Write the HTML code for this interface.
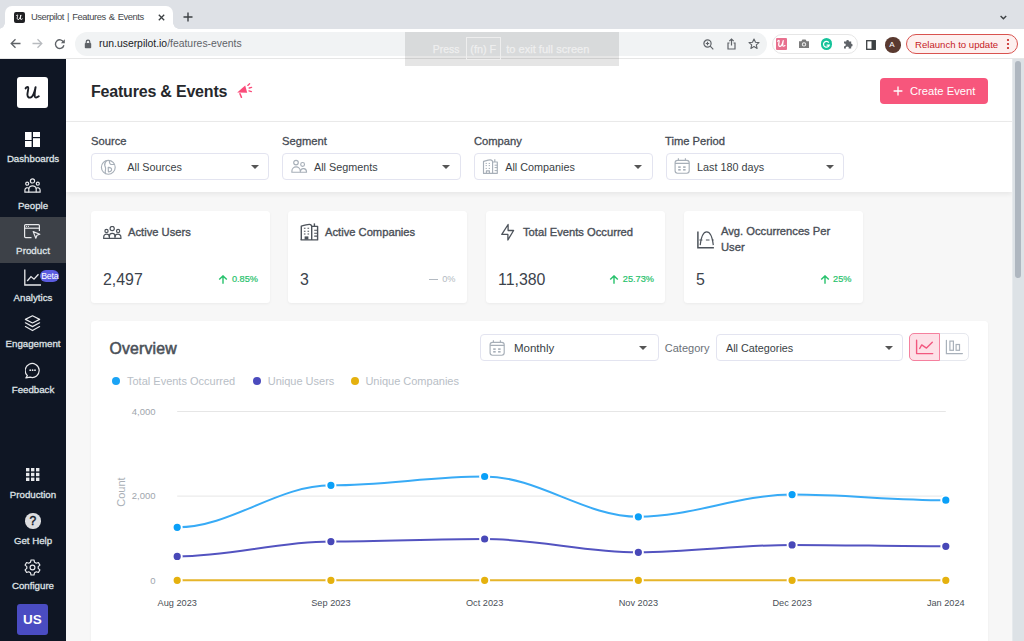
<!DOCTYPE html>
<html><head><meta charset="utf-8">
<style>
*{box-sizing:border-box;margin:0;padding:0}
html,body{width:1024px;height:641px;overflow:hidden;background:#fff;font-family:"Liberation Sans",sans-serif;}
.abs{position:absolute}
.t{position:absolute;white-space:nowrap;line-height:1}
/* chrome */
#tabstrip{left:0;top:0;width:1024px;height:29px;background:#dee1e6}
#tab{left:5px;top:6px;width:168px;height:23px;background:#fff;border-radius:7px 7px 0 0}
#toolbar{left:0;top:29px;width:1024px;height:30px;background:#fff}
#urlpill{left:75px;top:32px;width:692px;height:24px;background:#f1f3f4;border-radius:12px}
#sep{left:0;top:58px;width:1024px;height:1px;background:#e6e6e6}
#extpill{left:772px;top:34px;width:86px;height:20px;border:1px solid #e6e6e6;border-radius:10px;background:#fff}
#relaunch{left:906px;top:34px;width:112px;height:20px;border:1px solid #d9534f;border-radius:10px;background:#fdf0ef}
/* sidebar */
#side{left:0;top:59px;width:66px;height:582px;background:#0f1624}
.sl{position:absolute;left:0;width:66px;text-align:center;color:#dfe1e5;font-size:9.6px;font-weight:400;-webkit-text-stroke:0.3px #dfe1e5;line-height:1;white-space:nowrap}
/* main */
#main{left:66px;top:59px;width:946px;height:582px;background:#f7f7f7}
#hdr{left:66px;top:59px;width:946px;height:63px;background:#fff;border-bottom:1px solid #ececec}
#filters{left:66px;top:122px;width:946px;height:70px;background:#fff;box-shadow:0 2px 5px rgba(0,0,0,0.07)}
.lbl{position:absolute;font-size:11.2px;color:#3f444b;white-space:nowrap;line-height:1}
.sel{position:absolute;height:27px;border:1px solid #e3e4f0;border-radius:4px;background:#fff}
.caret{position:absolute;width:0;height:0;border-left:4px solid transparent;border-right:4px solid transparent;border-top:4px solid #555}
.card{position:absolute;background:#fff;border-radius:3.5px;box-shadow:0 1px 3px rgba(0,0,0,0.05)}
.ct{position:absolute;font-size:11.2px;font-weight:400;-webkit-text-stroke:0.35px #4a4f57;color:#4a4f57;white-space:nowrap;line-height:1}
.cv{position:absolute;font-size:15.9px;color:#3c434c;white-space:nowrap;line-height:1}
.cp{position:absolute;font-size:9px;color:#2bbf6a;white-space:nowrap;line-height:1}
#scroll{left:1012px;top:59px;width:12px;height:582px;background:#dde2e6;border-left:1px solid #e6eaed}
#thumb{left:1015px;top:61px;width:6.2px;height:216.5px;background:#afb7c0;border-radius:3.1px}
</style></head>
<body>
<div id="tabstrip" class="abs"></div>
<div id="tab" class="abs"></div>
<div id="toolbar" class="abs"></div>
<div class="abs" style="left:-1px;top:23px;width:6px;height:6px;background:radial-gradient(circle at 0 0,#dee1e6 5.5px,#fff 6px)"></div>
<div class="abs" style="left:173px;top:23px;width:6px;height:6px;background:radial-gradient(circle at 6px 0,#dee1e6 5.5px,#fff 6px)"></div>

<div id="urlpill" class="abs"></div>
<div id="sep" class="abs"></div>
<div id="extpill" class="abs"></div>
<div id="relaunch" class="abs"></div>
<!-- tab content -->
<div class="abs" style="left:14px;top:12px;width:11px;height:11px;background:#202124;border-radius:2px"></div>
<svg class="abs" style="left:14px;top:12px" width="11" height="11" viewBox="3 3.5 25 25"><path d="M8.6 11.4C9.4 10.2 10.6 9.6 11.2 10.4C11.8 11.2 10.4 15.4 10.4 17.6C10.4 19.8 11.6 20.8 13.2 20.6C15.6 20.2 17.4 15.8 18.6 10.2C18 13.6 17.4 17.4 17.8 19.4C18.2 21 19.6 20.8 21.8 19.2" stroke="#fff" stroke-width="2.2" fill="none" stroke-linecap="round" stroke-linejoin="round"/></svg>
<div class="t" style="left:31px;top:11.9px;font-size:9.4px;letter-spacing:-0.45px;word-spacing:1px;color:#45484c">Userpilot | Features &amp; Events</div>
<svg class="abs" style="left:158px;top:14px" width="7" height="7" viewBox="0 0 7 7"><path d="M0.8 0.8L6.2 6.2M6.2 0.8L0.8 6.2" stroke="#3c4043" stroke-width="1.3"/></svg>
<svg class="abs" style="left:183px;top:12px" width="10" height="10" viewBox="0 0 10 10"><path d="M5 0.5V9.5M0.5 5H9.5" stroke="#3c4043" stroke-width="1.4"/></svg>
<svg class="abs" style="left:998.5px;top:14px" width="9" height="7" viewBox="0 0 9 7"><path d="M1.6 2L4.4 4.8L7.2 2" stroke="#3c4043" stroke-width="1.4" fill="none"/></svg>
<!-- nav -->
<svg class="abs" style="left:10px;top:38px" width="11" height="11" viewBox="0 0 11 11"><path d="M10.5 5.5H1.2M5.5 1.2L1.2 5.5L5.5 9.8" stroke="#5f6368" stroke-width="1.3" fill="none"/></svg>
<svg class="abs" style="left:32px;top:38px" width="11" height="11" viewBox="0 0 11 11"><path d="M0.5 5.5H9.8M5.5 1.2L9.8 5.5L5.5 9.8" stroke="#b8bbbf" stroke-width="1.3" fill="none"/></svg>
<svg class="abs" style="left:54px;top:38px" width="12" height="12" viewBox="0 0 12 12"><path d="M9.6 4.2A4.3 4.3 0 1 0 9.9 7.2" stroke="#5f6368" stroke-width="1.4" fill="none"/><path d="M10.8 1.2V5.2H6.8Z" fill="#5f6368"/></svg>
<!-- lock -->
<svg class="abs" style="left:84px;top:39px" width="8" height="10" viewBox="0 0 8 10"><rect x="0.8" y="4" width="6.4" height="5.2" rx="0.8" fill="#5f6368"/><path d="M2.2 4.2V3A1.8 1.8 0 0 1 5.8 3V4.2" stroke="#5f6368" stroke-width="1.2" fill="none"/></svg>
<div class="t" style="left:99px;top:38.8px;font-size:10.4px;color:#202124">run.userpilot.io<span style="color:#5f6368">/features-events</span></div>
<!-- url right icons -->
<svg class="abs" style="left:703px;top:39px" width="11" height="11" viewBox="0 0 11 11"><circle cx="4.5" cy="4.5" r="3.6" stroke="#5f6368" stroke-width="1.2" fill="none"/><path d="M7.2 7.2L10.3 10.3M4.5 2.8V6.2M2.8 4.5H6.2" stroke="#5f6368" stroke-width="1.2"/></svg>
<svg class="abs" style="left:726px;top:38px" width="11" height="12" viewBox="0 0 11 12"><path d="M3.5 5H2V11H9V5H7.5" stroke="#5f6368" stroke-width="1.2" fill="none"/><path d="M5.5 7.5V1M3.3 3.2L5.5 1L7.7 3.2" stroke="#5f6368" stroke-width="1.2" fill="none"/></svg>
<svg class="abs" style="left:748px;top:38px" width="12" height="12" viewBox="0 0 12 12"><path d="M6 1L7.5 4.3L11 4.6L8.3 6.9L9.1 10.4L6 8.6L2.9 10.4L3.7 6.9L1 4.6L4.5 4.3Z" stroke="#5f6368" stroke-width="1.1" fill="none" stroke-linejoin="round"/></svg>
<!-- extensions -->
<div class="abs" style="left:776px;top:38px;width:11px;height:11.5px;background:#e8718f;border-radius:1px"></div>
<svg class="abs" style="left:776px;top:38.2px" width="11" height="11" viewBox="5.5 5.5 20 20"><path d="M8.6 11.4C9.4 10.2 10.6 9.6 11.2 10.4C11.8 11.2 10.4 15.4 10.4 17.6C10.4 19.8 11.6 20.8 13.2 20.6C15.6 20.2 17.4 15.8 18.6 10.2C18 13.6 17.4 17.4 17.8 19.4C18.2 21 19.6 20.8 21.8 19.2" stroke="#fff" stroke-width="2.2" fill="none" stroke-linecap="round" stroke-linejoin="round"/></svg>
<svg class="abs" style="left:798px;top:38px" width="12" height="11" viewBox="0 0 12 11"><path d="M1 3.2H3.4L4.4 1.6H7.6L8.6 3.2H11V10H1Z" fill="#7c7c7c"/><circle cx="6" cy="6.4" r="2.1" fill="#fff"/><circle cx="6" cy="6.4" r="1.2" fill="#7c7c7c"/></svg>
<div class="abs" style="left:820.5px;top:38px;width:11.5px;height:11.5px;background:#15c39a;border-radius:50%"></div>
<svg class="abs" style="left:822px;top:39.5px" width="9" height="9" viewBox="0 0 9 9"><path d="M6.8 2.6A2.9 2.9 0 1 0 7.2 5.2H4.6" stroke="#fff" stroke-width="1.3" fill="none"/></svg>
<svg class="abs" style="left:843px;top:38px" width="11" height="11" viewBox="0 0 11 11"><path d="M1 3.5H3.2A1.4 1.4 0 1 1 6 3.5H8.2V5.8A1.4 1.4 0 1 1 8.2 8.6V10.5H5.6A1.4 1.4 0 1 0 3 10.5H1V8.2A1.4 1.4 0 1 0 1 5.5Z" fill="#5f6368"/></svg>
<svg class="abs" style="left:866px;top:39.5px" width="10" height="10" viewBox="0 0 10 10"><rect x="0.7" y="0.7" width="8.6" height="8.6" stroke="#3c4043" stroke-width="1.3" fill="none"/><rect x="5.5" y="0.7" width="3.8" height="8.6" fill="#3c4043"/></svg>
<div class="abs" style="left:885px;top:37px;width:15.5px;height:15.5px;background:#5a3a30;border-radius:50%"></div>
<div class="t" style="left:889.3px;top:41px;font-size:8px;color:#fff">A</div>
<div class="t" style="left:915px;top:39.5px;font-size:9.6px;color:#c5221f">Relaunch to update</div>
<svg class="abs" style="left:1006px;top:38px" width="4" height="12" viewBox="0 0 4 12"><circle cx="2" cy="2" r="1.1" fill="#c5221f"/><circle cx="2" cy="6" r="1.1" fill="#c5221f"/><circle cx="2" cy="10" r="1.1" fill="#c5221f"/></svg>


<div id="side" class="abs"></div>

<!-- sidebar -->
<div class="abs" style="left:17px;top:77px;width:31px;height:31px;background:#fff;border-radius:3px"></div>
<svg class="abs" style="left:17px;top:77px" width="31" height="31" viewBox="0 0 31 31"><path d="M8.6 11.4C9.4 10.2 10.6 9.6 11.2 10.4C11.8 11.2 10.4 15.4 10.4 17.6C10.4 19.8 11.6 20.8 13.2 20.6C15.6 20.2 17.4 15.8 18.6 10.2C18 13.6 17.4 17.4 17.8 19.4C18.2 21 19.6 20.8 21.8 19.2" stroke="#1b1f27" stroke-width="1.9" fill="none" stroke-linecap="round" stroke-linejoin="round"/></svg>
<svg class="abs" style="left:25px;top:132px" width="15" height="15" viewBox="0 0 15 15"><rect x="0" y="0" width="6.6" height="8" fill="#fff"/><rect x="8" y="0" width="7" height="5" fill="#fff"/><rect x="0" y="9" width="6.6" height="6" fill="#fff"/><rect x="8" y="6.2" width="7" height="8.8" fill="#fff"/></svg>
<div class="sl" style="top:154.4px;font-size:9.7px">Dashboards</div>

<svg class="abs" style="left:24px;top:178px" width="17" height="15" viewBox="0 0 17 15"><g stroke="#e8e9ec" stroke-width="1.2" fill="none"><circle cx="8.5" cy="2.9" r="2.1"/><circle cx="3.2" cy="5.7" r="1.5"/><circle cx="13.8" cy="5.7" r="1.5"/><path d="M4.8 14.2V11.2A3.7 3.4 0 0 1 12.2 11.2V14.2Z"/><path d="M4.8 14.2H0.9V11.9A2.3 2.2 0 0 1 5 10.6"/><path d="M12.2 14.2H16.1V11.9A2.3 2.2 0 0 0 12 10.6"/></g></svg>
<div class="sl" style="top:200.5px;font-size:9.7px">People</div>

<div class="abs" style="left:0;top:217px;width:66px;height:46px;background:#3d4148"></div>
<svg class="abs" style="left:24px;top:224px" width="17" height="15" viewBox="0 0 17 15"><g stroke="#e8e9ec" stroke-width="1.2" fill="none" stroke-linejoin="round"><path d="M7.5 13.6H1.6A1 1 0 0 1 0.6 12.6V1.6A1 1 0 0 1 1.6 0.6H14.4A1 1 0 0 1 15.4 1.6V7"/><path d="M0.6 4.2H15.4"/><path d="M9.2 7.6L15.8 10.2L13 11.2L11.8 14.2Z"/></g><circle cx="2.6" cy="2.4" r="0.55" fill="#e8e9ec"/><circle cx="4.4" cy="2.4" r="0.55" fill="#e8e9ec"/></svg>
<div class="sl" style="top:246.3px;font-size:9.8px">Product</div>

<svg class="abs" style="left:24px;top:269px" width="18" height="17" viewBox="0 0 18 17"><g stroke="#e8e9ec" stroke-width="1.3" fill="none"><path d="M0.8 0.5V16H17"/><path d="M3.2 12L7 7.6L10 10.2L14.5 5.2"/></g></svg>
<div class="abs" style="left:39.5px;top:269.5px;width:19.5px;height:12.5px;background:#5b5ce0;border-radius:6.5px"></div>
<div class="t" style="left:41.2px;top:271.8px;font-size:8.8px;letter-spacing:-0.2px;color:#fff">Beta</div>
<div class="sl" style="top:292.6px;font-size:9.7px">Analytics</div>

<svg class="abs" style="left:24px;top:315px" width="17" height="17" viewBox="0 0 17 17"><g stroke="#e8e9ec" stroke-width="1.2" fill="none" stroke-linejoin="round" stroke-linecap="round"><path d="M8.5 0.8L15.6 4.4L8.5 8L1.4 4.4Z"/><path d="M1.4 7.8L8.5 11.6L15.6 7.8"/><path d="M1.4 11.6L8.5 15.6L15.6 11.6"/></g></svg>
<div class="sl" style="top:338.6px;font-size:9.7px">Engagement</div>

<svg class="abs" style="left:25px;top:361.5px" width="16" height="17" viewBox="0 0 16 17"><path d="M2.4 13.6A7 7 0 1 1 5.2 15.2L0.9 15.9Z" stroke="#e8e9ec" stroke-width="1.2" fill="none" stroke-linejoin="round"/><circle cx="5.2" cy="8.2" r="0.9" fill="#e8e9ec"/><circle cx="7.6" cy="8.2" r="0.9" fill="#e8e9ec"/><circle cx="10" cy="8.2" r="0.9" fill="#e8e9ec"/></svg>
<div class="sl" style="top:384.6px;font-size:9.7px">Feedback</div>

<svg class="abs" style="left:26px;top:468px" width="14" height="14" viewBox="0 0 14 14"><g fill="#e8e9ec"><rect x="0" y="0" width="3.4" height="3.4"/><rect x="5" y="0" width="3.4" height="3.4"/><rect x="10" y="0" width="3.4" height="3.4"/><rect x="0" y="4.8" width="3.4" height="3.4"/><rect x="5" y="4.8" width="3.4" height="3.4"/><rect x="10" y="4.8" width="3.4" height="3.4"/><rect x="0" y="9.6" width="3.4" height="3.4"/><rect x="5" y="9.6" width="3.4" height="3.4"/><rect x="10" y="9.6" width="3.4" height="3.4"/></g></svg>
<div class="sl" style="top:489.6px;font-size:9.7px">Production</div>

<div class="abs" style="left:25px;top:513px;width:15.5px;height:15.5px;background:#dcdde0;border-radius:50%"></div>
<div class="t" style="left:29.5px;top:514.8px;font-size:12px;color:#0f1624;-webkit-text-stroke:0.4px #0f1624">?</div>
<div class="sl" style="top:535.6px;font-size:9.7px">Get Help</div>

<svg class="abs" style="left:24px;top:558.5px" width="17" height="17" viewBox="0 0 17 17"><path d="M7 1H10L10.5 3.2L12.3 4.2L14.4 3.5L15.9 6.1L14.2 7.6V9.4L15.9 10.9L14.4 13.5L12.3 12.8L10.5 13.8L10 16H7L6.5 13.8L4.7 12.8L2.6 13.5L1.1 10.9L2.8 9.4V7.6L1.1 6.1L2.6 3.5L4.7 4.2L6.5 3.2Z" stroke="#e8e9ec" stroke-width="1.2" fill="none" stroke-linejoin="round"/><circle cx="8.5" cy="8.5" r="2.4" stroke="#e8e9ec" stroke-width="1.2" fill="none"/></svg>
<div class="sl" style="top:581.4px;font-size:9.7px">Configure</div>

<div class="abs" style="left:17px;top:604px;width:31px;height:31px;background:#4a4cc2;border-radius:3px"></div>
<div class="t" style="left:17px;top:613px;width:31px;text-align:center;font-size:13.5px;font-weight:700;color:#fff">US</div>
<div id="main" class="abs"></div>
<div id="hdr" class="abs"></div>
<div id="filters" class="abs"></div>
<div class="t" style="left:91px;top:83.7px;font-size:16px;color:#26282c;font-weight:700;letter-spacing:-0.2px">Features &amp; Events</div>
<svg class="abs" style="left:236px;top:83px" width="17" height="16" viewBox="0 0 17 16"><path d="M1.2 9.6L9.2 2.6L11.2 9.8Z" fill="#fa4c7a"/><path d="M4 10.8L5.4 14.2" stroke="#fa4c7a" stroke-width="1.6" stroke-linecap="round"/><path d="M11.8 2.4L13.6 0.8M13.2 5L15.6 4.4M13 7.8L15.4 8.6" stroke="#fa4c7a" stroke-width="1.3" stroke-linecap="round"/></svg>
<div class="abs" style="left:880px;top:78px;width:108px;height:26px;background:#f7567c;border-radius:4px"></div>
<svg class="abs" style="left:893px;top:86px" width="10" height="10" viewBox="0 0 10 10"><path d="M5 0.6V9.4M0.6 5H9.4" stroke="#fff" stroke-width="1.3"/></svg>
<div class="t" style="left:910px;top:85.52px;font-size:11.2px;color:#fff;">Create Event</div>
<div class="t" style="left:91px;top:136.02px;font-size:11.2px;color:#464b53;-webkit-text-stroke:0.3px #464b53;">Source</div>
<div class="sel" style="left:90.8px;top:152.7px;width:178.7px;height:27px"></div>
<div class="t" style="left:127.3px;top:162.36px;font-size:10.8px;color:#3a3f46;">All Sources</div>
<div class="caret" style="left:250.8px;top:165px"></div>
<div class="t" style="left:282px;top:136.02px;font-size:11.2px;color:#464b53;-webkit-text-stroke:0.3px #464b53;">Segment</div>
<div class="sel" style="left:282.3px;top:152.7px;width:178.7px;height:27px"></div>
<div class="t" style="left:314px;top:162.36px;font-size:10.8px;color:#3a3f46;">All Segments</div>
<div class="caret" style="left:442.3px;top:165px"></div>
<div class="t" style="left:474px;top:136.02px;font-size:11.2px;color:#464b53;-webkit-text-stroke:0.3px #464b53;">Company</div>
<div class="sel" style="left:473.9px;top:152.7px;width:178.7px;height:27px"></div>
<div class="t" style="left:505.2px;top:162.36px;font-size:10.8px;color:#3a3f46;">All Companies</div>
<div class="caret" style="left:633.9px;top:165px"></div>
<div class="t" style="left:665px;top:136.02px;font-size:11.2px;color:#464b53;-webkit-text-stroke:0.3px #464b53;">Time Period</div>
<div class="sel" style="left:665.5px;top:152.7px;width:178.7px;height:27px"></div>
<div class="t" style="left:697px;top:162.36px;font-size:10.8px;color:#3a3f46;">Last 180 days</div>
<div class="caret" style="left:825.5px;top:165px"></div>
<svg class="abs" style="left:100px;top:159px" width="17" height="17" viewBox="0 0 17 17"><g stroke="#a7afb8" stroke-width="1.15" fill="none" stroke-linejoin="round"><circle cx="8.3" cy="8.3" r="6.9"/><path d="M6.6 1.6C5 3.4 4.2 5 4.8 6.6C5.4 8.2 6 8.9 5.5 10.6C5.1 12.1 4.9 13.6 5.7 15.1"/><path d="M9.4 1.5C9.3 3.5 9.8 5.4 11.4 5.5L14.4 5.5"/><path d="M8.2 8.4C10.2 8.2 11.9 9.2 11.6 10.8C11.3 12.3 9.8 12.8 8.4 12.8Z"/></g></svg>
<svg class="abs" style="left:291px;top:159px" width="17" height="15" viewBox="0 0 17 15"><g stroke="#a7afb8" stroke-width="1.15" fill="none"><circle cx="5" cy="3.6" r="2.3"/><circle cx="11.6" cy="5.4" r="1.9"/><path d="M0.9 13.2V12.1A4.2 4.3 0 0 1 9.3 12.1V13.2Z"/><path d="M9.3 13.2H15.5V12.6A3.1 3.2 0 0 0 9.4 12"/></g></svg>
<svg class="abs" style="left:478px;top:155px" width="26" height="25" viewBox="0 0 26 25"><g stroke="#a7afb8" stroke-width="1.15" fill="none" stroke-linejoin="round"><path d="M5.5 18.3V6.4C7.8 5.8 10.6 5 12.2 4.9C13.6 4.8 14.6 5.8 14.6 6.9V18.3"/><path d="M14.6 7H19.3V18.3H5"/><path d="M16.8 4.3V7"/><path d="M8.4 18.3V15.8H11.4V18.3"/></g><g stroke="#a7afb8" stroke-width="1"><path d="M7.6 8.4H8.9M10.7 8.4H12M7.6 10.6H8.9M10.7 10.6H12M7.6 13.4H8.9M10.7 13.4H12"/><path d="M16.6 10.2H19.3M16.6 12.6H19.3M16.6 15.6H19.3"/></g></svg>
<svg class="abs" style="left:669px;top:155px" width="26" height="25" viewBox="0 0 26 25"><g stroke="#a7afb8" stroke-width="1.15" fill="none"><rect x="6.1" y="5.3" width="14.1" height="12.9" rx="2.4"/><path d="M6.1 8.4H20.2M9.4 3.2V5.6M16.4 3.2V5.6"/></g><g fill="#a7afb8"><rect x="9.2" y="11.3" width="2.5" height="1.6"/><rect x="14.1" y="11.3" width="2.5" height="1.6"/><rect x="9.2" y="14" width="2.5" height="1.6"/><rect x="14.1" y="14" width="2.5" height="1.6"/></g></svg>
<div class="card" style="left:91px;top:211px;width:179px;height:92px"></div>
<div class="ct" style="left:128px;top:227.39px">Active Users</div>
<div class="cv" style="left:103px;top:271.54px">2,497</div>
<div class="card" style="left:288px;top:211px;width:179px;height:92px"></div>
<div class="ct" style="left:325px;top:227.39px">Active Companies</div>
<div class="cv" style="left:300px;top:271.54px">3</div>
<div class="card" style="left:486px;top:211px;width:179px;height:92px"></div>
<div class="ct" style="left:523px;top:227.39px">Total Events Occurred</div>
<div class="cv" style="left:498px;top:271.54px">11,380</div>
<div class="card" style="left:684px;top:211px;width:179px;height:92px"></div>
<div class="ct" style="left:721px;top:223.3px;line-height:16px">Avg. Occurrences Per<br>User</div>
<div class="cv" style="left:696px;top:271.54px">5</div>
<svg class="abs" style="left:102.5px;top:226px" width="19" height="14" viewBox="0 0 19 14"><g stroke="#4d535b" stroke-width="1.2" fill="none"><circle cx="9.2" cy="2.5" r="2.1"/><circle cx="3.5" cy="4.9" r="1.6"/><circle cx="15.1" cy="4.9" r="1.6"/><path d="M6.4 12.4V10.1A2.8 2.8 0 0 1 12 10.1V12.4Z"/><path d="M6.4 12.4H0.7V11A2.85 2.85 0 0 1 6.4 11"/><path d="M12 12.4H17.9V11A2.95 2.85 0 0 0 12 11"/></g></svg>
<svg class="abs" style="left:295px;top:218px" width="30" height="27" viewBox="0 0 30 27"><g stroke="#4d535b" stroke-width="1.4" fill="none" stroke-linejoin="round"><path d="M6.3 21.9V8.1C9 7.4 12.4 6.6 14.2 6.4C15.8 6.3 16.7 7.4 16.7 8.6V21.9"/><path d="M16.7 8.4H22.6V21.9H5.6"/><path d="M19.4 5.4V8.4"/></g><g stroke="#4d535b" stroke-width="1.1"><path d="M8.9 10.3H10.5M12.5 10.3H14.1M8.9 13.3H10.5M12.5 13.3H14.1M8.9 16H10.5M12.5 16H14.1"/><path d="M19.2 12.2H22M19.2 15.2H22M19.2 18.1H22"/></g><rect x="9.6" y="18.4" width="3.8" height="3.2" fill="#4d535b"/></svg>
<svg class="abs" style="left:496px;top:220px" width="24" height="25" viewBox="0 0 24 25"><path d="M12.1 4.5L5.8 14.4H11.9V20L17.6 10.5H12.1Z" stroke="#4d535b" stroke-width="1.3" fill="none" stroke-linejoin="round"/></svg>
<svg class="abs" style="left:696px;top:229.5px" width="19" height="19" viewBox="0 0 19 19"><g stroke="#4d535b" fill="none"><path d="M1.9 1.6V17.8H17.9" stroke-width="1.5"/><path d="M4.2 15.1C5.2 6.5 7.4 1.8 10.7 1.8C14 1.8 16.3 6.5 17.3 15.1" stroke-width="1.2"/><path d="M3.4 10H6.4M9.9 10H13.5M15.8 10H17.7" stroke-width="1.1"/></g></svg>
<svg class="abs" style="left:217.5px;top:275px" width="10" height="9" viewBox="0 0 10 9"><path d="M5 8.8V1M1.2 4.6L5 0.9L8.8 4.6" stroke="#27c26c" stroke-width="1.4" fill="none"/></svg>
<div class="t" style="left:58px;width:200px;text-align:right;top:274.81px;font-size:9.2px;color:#27c26c;-webkit-text-stroke:0.2px #27c26c;">0.85%</div>
<div class="abs" style="left:429px;top:278.5px;width:9px;height:1.4px;background:#b3bac2"></div>
<div class="t" style="left:255.5px;width:200px;text-align:right;top:274.81px;font-size:9.2px;color:#b3bac2;">0%</div>
<svg class="abs" style="left:608.5px;top:275px" width="10" height="9" viewBox="0 0 10 9"><path d="M5 8.8V1M1.2 4.6L5 0.9L8.8 4.6" stroke="#27c26c" stroke-width="1.4" fill="none"/></svg>
<div class="t" style="left:454px;width:200px;text-align:right;top:274.81px;font-size:9.2px;color:#27c26c;-webkit-text-stroke:0.2px #27c26c;">25.73%</div>
<svg class="abs" style="left:819.5px;top:275px" width="10" height="9" viewBox="0 0 10 9"><path d="M5 8.8V1M1.2 4.6L5 0.9L8.8 4.6" stroke="#27c26c" stroke-width="1.4" fill="none"/></svg>
<div class="t" style="left:651.5px;width:200px;text-align:right;top:274.81px;font-size:9.2px;color:#27c26c;-webkit-text-stroke:0.2px #27c26c;">25%</div>
<div class="card" style="left:91px;top:321px;width:897px;height:340px"></div>
<div class="t" style="left:109.4px;top:340.8px;font-size:15.8px;color:#4a5058;letter-spacing:0.2px;-webkit-text-stroke:0.55px #4a5058">Overview</div>
<div class="sel" style="left:479.5px;top:333.5px;width:179px;height:27px"></div>
<svg class="abs" style="left:483.5px;top:336.9px" width="26" height="25" viewBox="0 0 26 25"><g stroke="#a7afb8" stroke-width="1.15" fill="none"><rect x="6.1" y="5.3" width="14.1" height="12.9" rx="2.4"/><path d="M6.1 8.4H20.2M9.4 3.2V5.6M16.4 3.2V5.6"/></g><g fill="#a7afb8"><rect x="9.2" y="11.3" width="2.5" height="1.6"/><rect x="14.1" y="11.3" width="2.5" height="1.6"/><rect x="9.2" y="14" width="2.5" height="1.6"/><rect x="14.1" y="14" width="2.5" height="1.6"/></g></svg>
<div class="t" style="left:514px;top:342.57px;font-size:11.5px;color:#3a3f46;">Monthly</div>
<div class="caret" style="left:638.5px;top:345.5px"></div>
<div class="t" style="left:664.8px;top:342.99px;font-size:11px;color:#6b7178;">Category</div>
<div class="sel" style="left:715.5px;top:333.5px;width:187.5px;height:27px"></div>
<div class="t" style="left:726px;top:343.16px;font-size:10.8px;color:#3a3f46;">All Categories</div>
<div class="caret" style="left:884.5px;top:345.5px"></div>
<div class="abs" style="left:909.3px;top:333.1px;width:60px;height:27.8px;border:1px solid #e6e8ee;border-radius:5px;background:#fff"></div>
<div class="abs" style="left:909.3px;top:333.1px;width:30.8px;height:27.8px;border:1px solid #f5809e;border-radius:5px 0 0 5px;background:#fde0e7"></div>
<svg class="abs" style="left:915px;top:339px" width="19" height="16" viewBox="0 0 19 16"><g stroke="#f2577f" stroke-width="1.4" fill="none" stroke-linecap="round" stroke-linejoin="round"><path d="M1.6 1.3V14.6H17.7"/><path d="M4.7 9.5L6.7 5.9L11.5 9.1L17.3 3.3"/></g></svg>
<svg class="abs" style="left:945px;top:339px" width="19" height="16" viewBox="0 0 19 16"><g stroke="#a9b1ba" stroke-width="1.2" fill="none" stroke-linecap="round"><path d="M1.4 1.3V14.6H17.4"/><rect x="4.9" y="2.1" width="3.5" height="9.2"/><rect x="11.1" y="5.5" width="3.4" height="5.8"/></g></svg>
<div class="abs" style="left:112.3px;top:376.7px;width:8px;height:8px;border-radius:50%;background:#1aa3f5"></div>
<div class="t" style="left:127px;top:375.89px;font-size:11px;color:#b8bec6;">Total Events Occurred</div>
<div class="abs" style="left:252.60000000000002px;top:376.7px;width:8px;height:8px;border-radius:50%;background:#4b4bbd"></div>
<div class="t" style="left:267.7px;top:375.89px;font-size:11px;color:#b8bec6;">Unique Users</div>
<div class="abs" style="left:350.8px;top:376.7px;width:8px;height:8px;border-radius:50%;background:#e5b10e"></div>
<div class="t" style="left:365.4px;top:375.89px;font-size:11px;color:#b8bec6;">Unique Companies</div>
<!--CHART-->
<svg class="abs" style="left:0;top:0" width="1024" height="641" viewBox="0 0 1024 641">
<path d="M177.2 411.5H945.8" stroke="#e6e6e6" stroke-width="1"/>
<path d="M177.2 496.1H945.8" stroke="#e6e6e6" stroke-width="1"/>
<path d="M177.2 580.3H945.8" stroke="#e6e6e6" stroke-width="1"/>
<path d="M177.20 580.30C231.00 580.30 277.12 580.30 330.92 580.30C384.72 580.30 430.84 580.30 484.64 580.30C538.44 580.30 584.56 580.30 638.36 580.30C692.16 580.30 738.28 580.30 792.08 580.30C845.88 580.30 892.00 580.30 945.80 580.30" stroke="#e6b52a" stroke-width="2" fill="none"/>
<circle cx="177.20" cy="580.3" r="4.55" fill="#e5b10e" stroke="#fff" stroke-width="1.9"/>
<circle cx="330.92" cy="580.3" r="4.55" fill="#e5b10e" stroke="#fff" stroke-width="1.9"/>
<circle cx="484.64" cy="580.3" r="4.55" fill="#e5b10e" stroke="#fff" stroke-width="1.9"/>
<circle cx="638.36" cy="580.3" r="4.55" fill="#e5b10e" stroke="#fff" stroke-width="1.9"/>
<circle cx="792.08" cy="580.3" r="4.55" fill="#e5b10e" stroke="#fff" stroke-width="1.9"/>
<circle cx="945.80" cy="580.3" r="4.55" fill="#e5b10e" stroke="#fff" stroke-width="1.9"/>
<path d="M177.20 556.40C231.00 556.40 277.12 541.60 330.92 541.60C384.72 541.60 430.84 539.00 484.64 539.00C538.44 539.00 584.56 552.30 638.36 552.30C692.16 552.30 738.28 544.90 792.08 544.90C845.88 544.90 892.00 546.30 945.80 546.30" stroke="#5353c0" stroke-width="2" fill="none"/>
<circle cx="177.20" cy="556.4" r="4.55" fill="#4848b8" stroke="#fff" stroke-width="1.9"/>
<circle cx="330.92" cy="541.6" r="4.55" fill="#4848b8" stroke="#fff" stroke-width="1.9"/>
<circle cx="484.64" cy="539.0" r="4.55" fill="#4848b8" stroke="#fff" stroke-width="1.9"/>
<circle cx="638.36" cy="552.3" r="4.55" fill="#4848b8" stroke="#fff" stroke-width="1.9"/>
<circle cx="792.08" cy="544.9" r="4.55" fill="#4848b8" stroke="#fff" stroke-width="1.9"/>
<circle cx="945.80" cy="546.3" r="4.55" fill="#4848b8" stroke="#fff" stroke-width="1.9"/>
<path d="M177.20 527.30C231.00 527.30 277.12 485.30 330.92 485.30C384.72 485.30 430.84 476.50 484.64 476.50C538.44 476.50 584.56 516.80 638.36 516.80C692.16 516.80 738.28 494.60 792.08 494.60C845.88 494.60 892.00 500.20 945.80 500.20" stroke="#38abf6" stroke-width="2" fill="none"/>
<circle cx="177.20" cy="527.3" r="4.55" fill="#0aa0f8" stroke="#fff" stroke-width="1.9"/>
<circle cx="330.92" cy="485.3" r="4.55" fill="#0aa0f8" stroke="#fff" stroke-width="1.9"/>
<circle cx="484.64" cy="476.5" r="4.55" fill="#0aa0f8" stroke="#fff" stroke-width="1.9"/>
<circle cx="638.36" cy="516.8" r="4.55" fill="#0aa0f8" stroke="#fff" stroke-width="1.9"/>
<circle cx="792.08" cy="494.6" r="4.55" fill="#0aa0f8" stroke="#fff" stroke-width="1.9"/>
<circle cx="945.80" cy="500.2" r="4.55" fill="#0aa0f8" stroke="#fff" stroke-width="1.9"/>
</svg>
<div class="t" style="left:95.5px;width:60px;text-align:right;top:406.76px;font-size:9.5px;color:#a0a6ad">4,000</div>
<div class="t" style="left:95.5px;width:60px;text-align:right;top:491.36px;font-size:9.5px;color:#a0a6ad">2,000</div>
<div class="t" style="left:95.5px;width:60px;text-align:right;top:575.56px;font-size:9.5px;color:#a0a6ad">0</div>
<div class="t" style="left:127.20px;width:100px;text-align:center;top:599.01px;font-size:9.2px;color:#4a4f57">Aug 2023</div>
<div class="t" style="left:280.92px;width:100px;text-align:center;top:599.01px;font-size:9.2px;color:#4a4f57">Sep 2023</div>
<div class="t" style="left:434.64px;width:100px;text-align:center;top:599.01px;font-size:9.2px;color:#4a4f57">Oct 2023</div>
<div class="t" style="left:588.36px;width:100px;text-align:center;top:599.01px;font-size:9.2px;color:#4a4f57">Nov 2023</div>
<div class="t" style="left:742.08px;width:100px;text-align:center;top:599.01px;font-size:9.2px;color:#4a4f57">Dec 2023</div>
<div class="t" style="left:895.80px;width:100px;text-align:center;top:599.01px;font-size:9.2px;color:#4a4f57">Jan 2024</div>
<div class="t" style="left:91.5px;width:60px;text-align:center;top:485.5px;font-size:11px;color:#a9afb6;transform:rotate(-90deg);transform-origin:30px 6px">Count</div>
<!--/CHART-->
<div id="scroll" class="abs"></div>
<div id="thumb" class="abs"></div>
<!--overlay-->
<div class="abs" style="left:404.7px;top:31.5px;width:214px;height:34.6px;background:rgba(0,0,0,0.1)"></div>
<div class="t" style="left:432.8px;top:44.6px;font-size:10.4px;color:#efefef;-webkit-text-stroke:0.25px #efefef">Press</div>
<div class="abs" style="left:465.5px;top:37px;width:35px;height:23px;border:1px solid #eeeeee"></div>
<div class="t" style="left:470.3px;top:44.4px;font-size:10.8px;color:#efefef;-webkit-text-stroke:0.25px #efefef">(fn) F</div>
<div class="t" style="left:506.2px;top:44.3px;font-size:11.1px;color:#efefef;-webkit-text-stroke:0.25px #efefef">to exit full screen</div>
</body></html>
